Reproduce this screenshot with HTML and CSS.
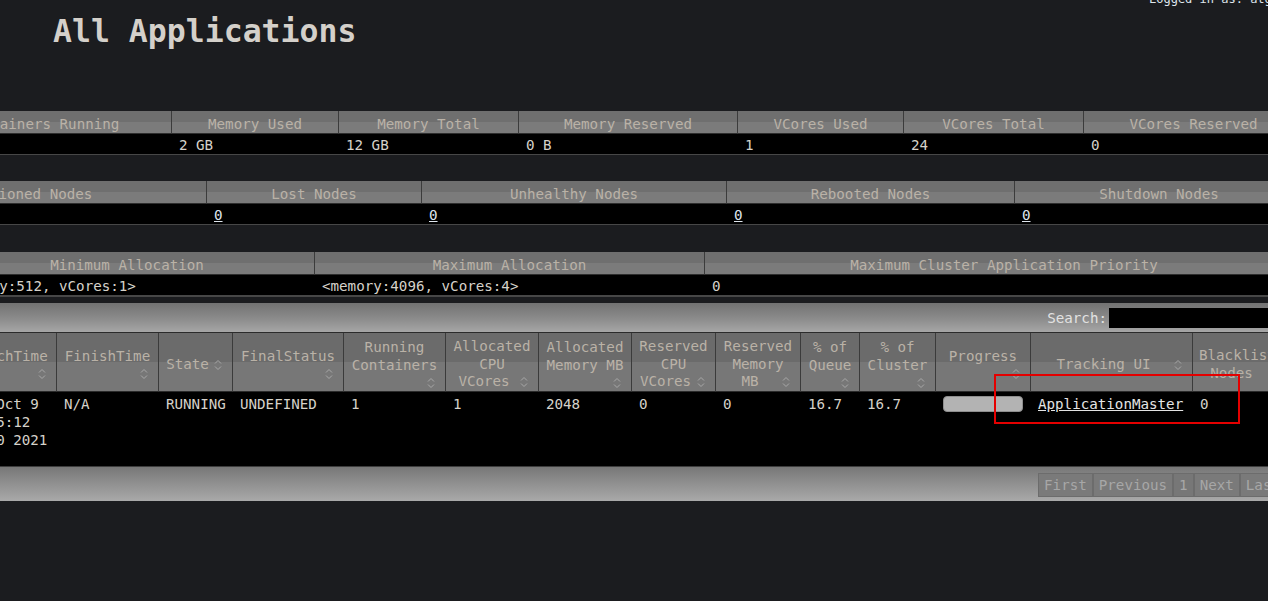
FILE: index.html
```html
<!DOCTYPE html>
<html lang="en">
<head>
<meta charset="utf-8">
<title>All Applications</title>
<link rel="stylesheet" href="styles.css">
</head>
<body>
<div class="page">
  <header class="header">
    <div class="login">Logged in as: atguigu</div>
    <h1 class="title">All Applications</h1>
  </header>

  <table class="metrics m1">
    <colgroup><col><col><col><col><col><col><col></colgroup>
    <thead>
      <tr><th>Containers Running</th><th>Memory Used</th><th>Memory Total</th><th>Memory Reserved</th><th>VCores Used</th><th>VCores Total</th><th>VCores Reserved</th></tr>
    </thead>
    <tbody>
      <tr><td>1</td><td>2 GB</td><td>12 GB</td><td>0 B</td><td>1</td><td>24</td><td>0</td></tr>
    </tbody>
  </table>

  <table class="metrics m2">
    <colgroup><col><col><col><col><col></colgroup>
    <thead>
      <tr><th>Decommissioned Nodes</th><th>Lost Nodes</th><th>Unhealthy Nodes</th><th>Rebooted Nodes</th><th>Shutdown Nodes</th></tr>
    </thead>
    <tbody>
      <tr><td><a class="num" href="#">0</a></td><td><a class="num" href="#">0</a></td><td><a class="num" href="#">0</a></td><td><a class="num" href="#">0</a></td><td><a class="num" href="#">0</a></td></tr>
    </tbody>
  </table>

  <table class="metrics m3">
    <colgroup><col><col><col></colgroup>
    <thead>
      <tr><th>Minimum Allocation</th><th>Maximum Allocation</th><th>Maximum Cluster Application Priority</th></tr>
    </thead>
    <tbody>
      <tr><td>&lt;memory:512, vCores:1&gt;</td><td>&lt;memory:4096, vCores:4&gt;</td><td>0</td></tr>
    </tbody>
  </table>

  <section class="apps">
    <div class="toolbar">
      <label class="search">Search:<input class="search-input" type="text"></label>
    </div>
    <table class="apps-table">
      <colgroup><col><col><col><col><col><col><col><col><col><col><col><col><col><col></colgroup>
      <thead>
        <tr>
          <th>LaunchTime<span class="sort"><svg viewBox="0 0 16 16"><path d="M5 7.5 8 4.5 11 7.5M5 10.5 8 13.5 11 10.5"/></svg></span></th>
          <th>FinishTime<span class="sort"><svg viewBox="0 0 16 16"><path d="M5 7.5 8 4.5 11 7.5M5 10.5 8 13.5 11 10.5"/></svg></span></th>
          <th>State<span class="sort"><svg viewBox="0 0 16 16"><path d="M5 7.5 8 4.5 11 7.5M5 10.5 8 13.5 11 10.5"/></svg></span></th>
          <th>FinalStatus<span class="sort"><svg viewBox="0 0 16 16"><path d="M5 7.5 8 4.5 11 7.5M5 10.5 8 13.5 11 10.5"/></svg></span></th>
          <th>Running Containers<span class="sort"><svg viewBox="0 0 16 16"><path d="M5 7.5 8 4.5 11 7.5M5 10.5 8 13.5 11 10.5"/></svg></span></th>
          <th>Allocated CPU VCores<span class="sort"><svg viewBox="0 0 16 16"><path d="M5 7.5 8 4.5 11 7.5M5 10.5 8 13.5 11 10.5"/></svg></span></th>
          <th>Allocated Memory MB<span class="sort"><svg viewBox="0 0 16 16"><path d="M5 7.5 8 4.5 11 7.5M5 10.5 8 13.5 11 10.5"/></svg></span></th>
          <th>Reserved CPU VCores<span class="sort"><svg viewBox="0 0 16 16"><path d="M5 7.5 8 4.5 11 7.5M5 10.5 8 13.5 11 10.5"/></svg></span></th>
          <th>Reserved Memory MB<span class="sort"><svg viewBox="0 0 16 16"><path d="M5 7.5 8 4.5 11 7.5M5 10.5 8 13.5 11 10.5"/></svg></span></th>
          <th>% of Queue<span class="sort"><svg viewBox="0 0 16 16"><path d="M5 7.5 8 4.5 11 7.5M5 10.5 8 13.5 11 10.5"/></svg></span></th>
          <th>% of Cluster<span class="sort"><svg viewBox="0 0 16 16"><path d="M5 7.5 8 4.5 11 7.5M5 10.5 8 13.5 11 10.5"/></svg></span></th>
          <th>Progress<span class="sort"><svg viewBox="0 0 16 16"><path d="M5 7.5 8 4.5 11 7.5M5 10.5 8 13.5 11 10.5"/></svg></span></th>
          <th>Tracking UI<span class="sort"><svg viewBox="0 0 16 16"><path d="M5 7.5 8 4.5 11 7.5M5 10.5 8 13.5 11 10.5"/></svg></span></th>
          <th>Blacklisted Nodes<span class="sort"><svg viewBox="0 0 16 16"><path d="M5 7.5 8 4.5 11 7.5M5 10.5 8 13.5 11 10.5"/></svg></span></th>
        </tr>
      </thead>
      <tbody>
        <tr>
          <td>Sat Oct 9 10:35:12 +0800 2021</td>
          <td>N/A</td>
          <td>RUNNING</td>
          <td>UNDEFINED</td>
          <td>1</td>
          <td>1</td>
          <td>2048</td>
          <td>0</td>
          <td>0</td>
          <td>16.7</td>
          <td>16.7</td>
          <td><div class="progress" title="10.0%"></div></td>
          <td><a class="link" href="#">ApplicationMaster</a></td>
          <td>0</td>
        </tr>
      </tbody>
    </table>
    <div class="footer">
      <div class="pager">
        <a class="page-btn" href="#">First</a><a class="page-btn" href="#">Previous</a><a class="page-btn current" href="#">1</a><a class="page-btn" href="#">Next</a><a class="page-btn" href="#">Last</a>
      </div>
    </div>
  </section>
</div>
<div class="highlight"></div>
</body>
</html>
```
FILE: styles.css
```css
* { box-sizing: border-box; }

html, body {
  margin: 0;
  background: #1b1c1f;
  overflow: hidden;
}

body {
  position: relative;
  width: 1268px;
  height: 601px;
  font-family: "DejaVu Sans Mono", "Liberation Mono", monospace;
  font-size: 14.2px;
  color: #d6d2ca;
}

.page {
  margin-top: -10px;
}

/* header */
.login {
  height: 18px;
  line-height: 18px;
  padding-left: 1149px;
  font-size: 12px;
  white-space: nowrap;
  color: #dfe5ec;
}

.title {
  margin: 5px 0 0 53px;
  font-size: 31.5px;
  line-height: 37px;
  font-weight: bold;
  color: #d4d0ca;
  white-space: nowrap;
}

/* metric tables */
.metrics {
  table-layout: fixed;
  border-collapse: separate;
  border-spacing: 0;
}

.metrics th {
  height: 23px;
  padding: 5px 6px 0;
  line-height: 17px;
  font-weight: normal;
  text-align: center;
  white-space: nowrap;
  color: #bab2a7;
  background: linear-gradient(to bottom, #6f6f6f 0, #6f6f6f 50%, #7b7b7b 50%, #7b7b7b 100%);
  border-left: 1px solid #3b3b3b;
  border-bottom: 1px solid #2e2e2e;
}

.metrics th:first-child { border-left: none; }

.metrics td {
  height: 21px;
  padding: 3px 8px 0;
  line-height: 17px;
  background: #000;
  white-space: nowrap;
  border-bottom: 1px solid #474747;
}

.m1 { margin-top: 61px; margin-left: -86px; width: 1389px; }
.m1 col:nth-child(1) { width: 257px; }
.m1 col:nth-child(2) { width: 167px; }
.m1 col:nth-child(3) { width: 180px; }
.m1 col:nth-child(4) { width: 219px; }
.m1 col:nth-child(5) { width: 166px; }
.m1 col:nth-child(6) { width: 180px; }
.m1 col:nth-child(7) { width: 220px; }

.m2 { margin-top: 26px; margin-left: -192px; width: 1495px; }
.m2 col:nth-child(1) { width: 398px; }
.m2 col:nth-child(2) { width: 215px; }
.m2 col:nth-child(3) { width: 305px; }
.m2 col:nth-child(4) { width: 288px; }
.m2 col:nth-child(5) { width: 289px; }

.m3 { margin-top: 27px; margin-left: -60px; width: 1363px; }
.m3 col:nth-child(1) { width: 374px; }
.m3 col:nth-child(2) { width: 390px; }
.m3 col:nth-child(3) { width: 599px; }
.m3 td { border-bottom: 2px solid #474747; height: 22px; }

.num {
  color: #dfe6ee;
  text-decoration: underline;
}

/* applications table */
.apps {
  margin-top: 6px;
  margin-left: -46px;
  width: 1349px;
}

.toolbar {
  height: 30px;
  display: flex;
  align-items: center;
  justify-content: flex-end;
  padding: 1px 8px 0 0;
  background: linear-gradient(to bottom, #727272 0%, #8c8c8c 55%, #a6a6a6 100%);
  border-bottom: 1px solid #2b2b2b;
}

.search {
  display: flex;
  align-items: center;
  color: #e2e2e2;
  white-space: nowrap;
}

.search-input {
  width: 186px;
  height: 20px;
  margin: 0 0 0 2px;
  padding: 0;
  border: none;
  background: #000;
  color: #ddd;
  font: inherit;
}

.apps-table {
  table-layout: fixed;
  border-collapse: separate;
  border-spacing: 0;
  width: 1332px;
}

.apps-table col:nth-child(1) { width: 102px; }
.apps-table col:nth-child(2) { width: 102px; }
.apps-table col:nth-child(3) { width: 74px; }
.apps-table col:nth-child(4) { width: 111px; }
.apps-table col:nth-child(5) { width: 102px; }
.apps-table col:nth-child(6) { width: 93px; }
.apps-table col:nth-child(7) { width: 93px; }
.apps-table col:nth-child(8) { width: 84px; }
.apps-table col:nth-child(9) { width: 85px; }
.apps-table col:nth-child(10) { width: 59px; }
.apps-table col:nth-child(11) { width: 76px; }
.apps-table col:nth-child(12) { width: 95px; }
.apps-table col:nth-child(13) { width: 162px; }
.apps-table col:nth-child(14) { width: 94px; }

.apps-table th {
  height: 59px;
  padding: 5px 6px 0;
  line-height: 17.5px;
  font-weight: normal;
  text-align: center;
  vertical-align: middle;
  color: #bab2a7;
  background: linear-gradient(to bottom, #6b6b6b 0, #6b6b6b 50%, #777777 50%, #777777 100%);
  border-left: 1px solid #3b3b3b;
  border-bottom: 1px solid #2b2b2b;
}

.apps-table th:first-child { border-left: none; }

.sort {
  float: right;
  width: 16px;
  height: 16px;
}

.sort svg {
  display: block;
  width: 16px;
  height: 16px;
  fill: none;
  stroke: #a9a9a9;
  stroke-width: 1;
}

.apps-table td {
  height: 75px;
  padding: 3px 8px;
  line-height: 18px;
  vertical-align: top;
  background: #000;
  border-bottom: 1px solid #3d3d3d;
}

.progress {
  width: 80px;
  height: 16px;
  margin-top: 1px;
  border: 1px solid #8e8e8e;
  border-radius: 4px;
  background: #b3b3b3;
}

.link {
  color: #e4e4e4;
  text-decoration: underline;
}

/* footer / pagination */
.footer {
  height: 34px;
  display: flex;
  align-items: center;
  justify-content: flex-end;
  padding: 1px 17px 0 0;
  background: linear-gradient(to bottom, #777777 0%, #8e8e8e 45%, #a9a9a9 100%);
}

.pager {
  display: flex;
}

.page-btn {
  height: 24px;
  line-height: 22px;
  padding: 0 5px;
  border: 1px solid #6c6c6c;
  background: #7a7a7a;
  color: #a7a7a7;
  text-decoration: none;
  white-space: nowrap;
}

.current {
  background: #777777;
}

/* red annotation box */
.highlight {
  position: absolute;
  left: 994px;
  top: 374px;
  width: 246px;
  height: 50px;
  border: 2px solid #e40000;
}
```
